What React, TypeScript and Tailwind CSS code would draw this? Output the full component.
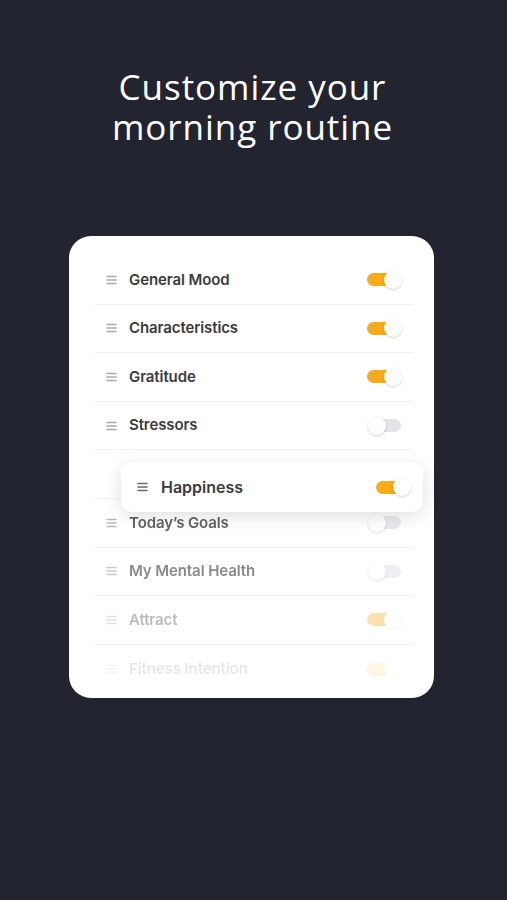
import React from "react";

function Handle({ dark }: { dark?: boolean }) {
  return (
    <svg width="11" height="10" viewBox="0 0 11 10" className="shrink-0">
      <g stroke={dark ? "#6b6b6b" : "#a9a9a9"} strokeWidth="1.6" strokeLinecap="round">
        <line x1="1" y1="1.5" x2="10" y2="1.5" />
        <line x1="1" y1="5" x2="10" y2="5" />
        <line x1="1" y1="8.5" x2="10" y2="8.5" />
      </g>
    </svg>
  );
}

function Toggle({ on }: { on: boolean }) {
  return (
    <div className="relative w-[35px] h-[18px] shrink-0">
      <div
        className={
          "absolute top-[2.5px] w-[31px] h-[13px] rounded-full " +
          (on ? "left-0 bg-[#f7ab1b]" : "left-[3px] bg-[#e3e4e8]")
        }
      />
      <div
        className={
          "absolute top-0 w-[18px] h-[18px] rounded-full bg-white shadow-[0_1px_3px_rgba(0,0,0,0.18)] " +
          (on ? "left-[17px]" : "left-[1px]")
        }
      />
    </div>
  );
}

type Row = { label: string; on: boolean; cls: string };

const rows: Row[] = [
  { label: "General Mood", on: true, cls: "" },
  { label: "Characteristics", on: true, cls: "" },
  { label: "Gratitude", on: true, cls: "" },
  { label: "Stressors", on: false, cls: "" },
];

const fadedRows: Row[] = [
  { label: "Today’s Goals", on: false, cls: "opacity-80" },
  { label: "My Mental Health", on: false, cls: "opacity-60 blur-[0.3px]" },
  { label: "Attract", on: true, cls: "opacity-35 blur-[0.5px]" },
  { label: "Fitness Intention", on: true, cls: "opacity-[0.12] blur-[0.6px]" },
];

function ListRow({ r, last }: { r: Row; last?: boolean }) {
  return (
    <div
      className={
        "h-[48.6px] flex items-center px-[11px] " +
        (last ? "" : "border-b border-[#f0f0f2]")
      }
    >
      <div className={"flex items-center w-full " + r.cls}>
        <Handle />
        <span className="ml-[12px] text-[15px] font-semibold text-[#3b3b3d] tracking-[-0.1px]">
          {r.label}
        </span>
        <div className="ml-auto">
          <Toggle on={r.on} />
        </div>
      </div>
    </div>
  );
}

export default function App() {
  return (
    <div
      className="w-[507px] h-[900px] bg-[#22242f] flex flex-col"
      style={{ fontFamily: "Inter, 'Liberation Sans', sans-serif" }}
    >
      <h1
        className="mt-[67px] ml-[-2px] text-white text-center text-[35px] leading-[40px] font-normal tracking-[0.95px]"
        style={{ fontFamily: "'Open Sans', 'Noto Sans', sans-serif" }}
      >
        Customize your
        <br />
        morning routine
      </h1>
      <div className="relative mt-[89px] ml-[69px] w-[365px] h-[462px] bg-white rounded-[22px] overflow-hidden">
        <div className="pt-[20px] pl-[26px] pr-[21px]">
          {rows.map((r) => (
            <ListRow key={r.label} r={r} />
          ))}
          <div className="h-[48.6px] border-b border-[#f0f0f2]" />
          {fadedRows.map((r, i) => (
            <ListRow key={r.label} r={r} last={i === fadedRows.length - 1} />
          ))}
        </div>
        <div className="absolute left-[52px] top-[226px] w-[302px] h-[50px] bg-white rounded-[11px] shadow-[0_4px_18px_rgba(0,0,0,0.13)] flex items-center pl-[16px] pr-[12px]">
          <Handle dark />
          <span className="ml-[13px] text-[16px] font-semibold text-[#3b3b3d]">Happiness</span>
          <div className="ml-auto">
            <Toggle on />
          </div>
        </div>
      </div>
    </div>
  );
}
